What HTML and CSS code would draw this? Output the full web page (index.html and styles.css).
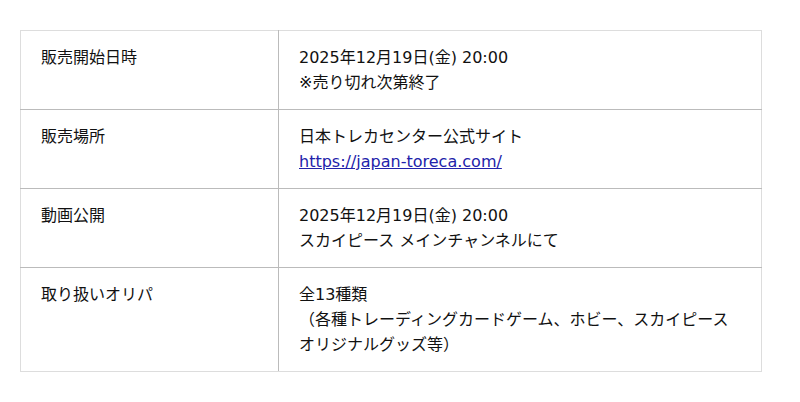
FILE: index.html
```html
<!DOCTYPE html>
<html lang="ja">
<head>
<meta charset="utf-8">
<link rel="stylesheet" href="styles.css">
</head>
<body>
<table class="info">
  <tr>
    <th>販売開始日時</th>
    <td>2025年12月19日(金) 20:00<br>※売り切れ次第終了</td>
  </tr>
  <tr>
    <th>販売場所</th>
    <td>日本トレカセンター公式サイト<br><a href="#">https://japan-toreca.com/</a></td>
  </tr>
  <tr>
    <th>動画公開</th>
    <td>2025年12月19日(金) 20:00<br>スカイピース メインチャンネルにて</td>
  </tr>
  <tr>
    <th>取り扱いオリパ</th>
    <td>全13種類<br>（各種トレーディングカードゲーム、ホビー、スカイピースオリジナルグッズ等）</td>
  </tr>
</table>
</body>
</html>
```

FILE: styles.css
```css
html, body {
  margin: 0;
  background: #fff;
}
body {
  padding: 30px 38px 0 20px;
  font-family: "DejaVu Sans", "Noto Sans CJK JP", sans-serif;
  font-size: 16px;
  color: #111;
}
.info {
  width: 742px;
  border-collapse: collapse;
  border: 1px solid #ddd;
}
.info th,
.info td {
  border: 1px solid #bbb;
  padding: 14px 20px;
  line-height: 25px;
  vertical-align: top;
  text-align: left;
  font-weight: normal;
}
.info th {
  width: 258px;
  box-sizing: border-box;
  border-left-color: #ddd;
}
.info tr:first-child th,
.info tr:first-child td {
  border-top-color: #ddd;
}
.info tr:last-child th,
.info tr:last-child td {
  border-bottom-color: #ddd;
}
.info td {
  border-right-color: #ddd;
}
.info a {
  color: #2222aa;
}
```
